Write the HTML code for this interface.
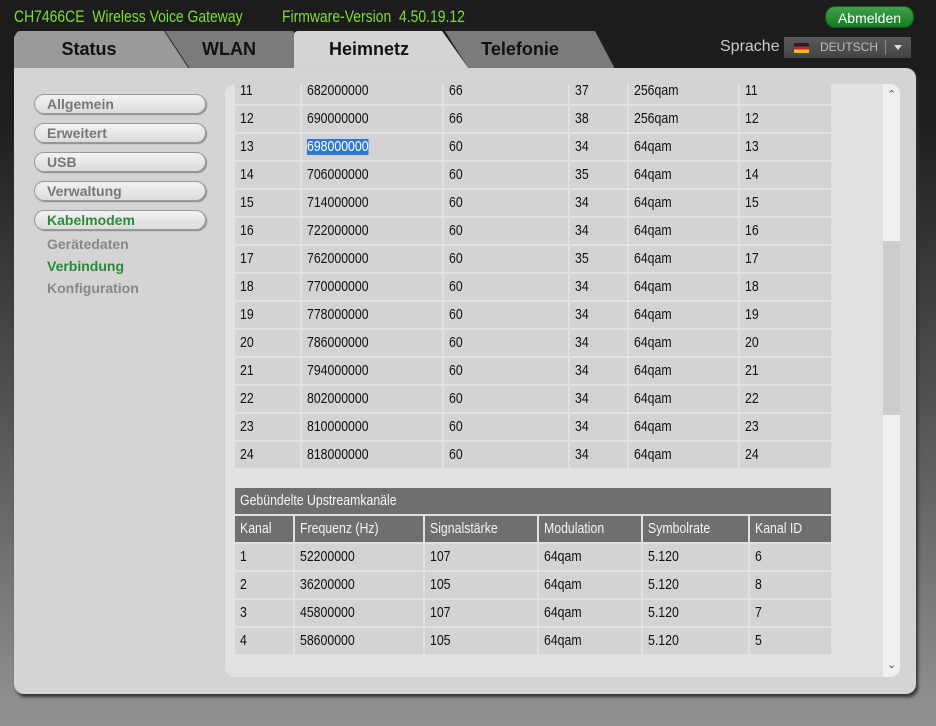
<!DOCTYPE html>
<html><head><meta charset="utf-8"><style>
*{margin:0;padding:0;box-sizing:border-box}
body{width:936px;height:726px;overflow:hidden;font-family:"Liberation Sans",Arial,sans-serif;background:linear-gradient(#1c1c1c 0px,#1e1e1e 120px,#555 420px,#8e8e8e 700px,#909090 726px);position:relative}
.a{position:absolute}
.s{display:inline-block;transform:scaleX(.82);transform-origin:0 50%;white-space:nowrap}
.top{color:#7ddc3c;font-size:17px;top:7px}
.btn{left:825px;top:6px;width:89px;height:22px;border-radius:10px;background:linear-gradient(#3fa14a,#167a26);color:#fff;font-size:14px;text-align:center;line-height:22px;border:1px solid #0d5a18}
.tab{top:31px;height:38px;font-weight:bold;font-size:18px;line-height:36px;text-align:center;color:#111}
.main{left:14px;top:68px;width:902px;height:626px;background:#d4d4d4;border-radius:0 10px 10px 10px;box-shadow:2px 3px 3px #333}
.side{left:34px;width:172px;height:20px;border:1px solid #9a9a9a;border-radius:10px;background:linear-gradient(#f2f2f2,#dcdcdc);font-weight:bold;font-size:14px;color:#777;padding-left:12px;line-height:18px;box-shadow:1px 1px 1px #888}
.sub{left:47px;font-weight:bold;font-size:14px;color:#888}
.inner{left:225px;top:84px;width:675px;height:593px;background:#e1e1e1;border-radius:10px;overflow:hidden}
.c{position:absolute;background:#d3d3d3;font-size:15px;color:#111;padding-left:5px;line-height:26px;height:26px}
.h{background:#6f6f6f;color:#f4f4f4}
</style></head><body>
<div class="a top" style="left:14px"><span class="s">CH7466CE&nbsp; Wireless Voice Gateway</span></div>
<div class="a top" style="left:282px"><span class="s">Firmware-Version&nbsp; 4.50.19.12</span></div>
<div class="a btn">Abmelden</div>
<div class="a tab" style="left:14px;width:175px;background:#9a9a9a;clip-path:polygon(0 6px,4px 0,150px 0,175px 38px,0 38px);text-indent:-25px;border-radius:6px 0 0 0">Status</div>
<div class="a tab" style="left:165px;width:150px;background:#7b7b7b;clip-path:polygon(0 0,128px 0,150px 38px,25px 38px);text-indent:-22px">WLAN</div>
<div class="a tab" style="left:294px;width:175px;background:#d4d4d4;clip-path:polygon(0 38px,0 0,148px 0,175px 38px);text-indent:-25px;border-radius:4px 0 0 0">Heimnetz</div>
<div class="a tab" style="left:445px;width:170px;background:#7b7b7b;clip-path:polygon(0 0,150px 0,170px 38px,24px 38px);text-indent:-20px">Telefonie</div>
<div class="a" style="left:720px;top:38px;color:#ccc;font-size:16px">Sprache</div>
<div class="a" style="left:784px;top:37px;width:127px;height:21px;background:linear-gradient(#5a5a5a,#444);color:#bbb;font-size:12px;line-height:21px">
<div class="a" style="left:10px;top:6px;width:15px;height:10px;background:linear-gradient(#222 33%,#c22 33%,#c22 66%,#e8c020 66%)"></div>
<span class="a" style="left:36px">DEUTSCH</span>
<div class="a" style="left:101px;top:3px;width:1px;height:15px;background:#888"></div>
<div class="a" style="left:110px;top:8px;border-left:4px solid transparent;border-right:4px solid transparent;border-top:5px solid #ddd"></div>
</div>
<div class="a main"></div>
<div class="a side" style="top:94px">Allgemein</div>
<div class="a side" style="top:123px">Erweitert</div>
<div class="a side" style="top:152px">USB</div>
<div class="a side" style="top:181px">Verwaltung</div>
<div class="a side" style="top:210px;color:#2a8a3a">Kabelmodem</div>
<div class="a sub" style="top:236px">Gerätedaten</div>
<div class="a sub" style="top:258px;color:#2a8a3a">Verbindung</div>
<div class="a sub" style="top:280px">Konfiguration</div>
<div class="a inner" id="in"></div>
<div class="a" style="left:883px;top:84px;width:17px;height:593px;background:#f0f0f0;border-radius:0 10px 10px 0"></div>
<div class="a" style="left:883px;top:241px;width:17px;height:174px;background:#cdcdcd"></div>
<div class="a" style="left:887px;top:88px;font-size:11px;color:#555">&#8963;</div>
<div class="a" style="left:887px;top:658px;font-size:11px;color:#555">&#8964;</div>
<script>
var inn=document.getElementById('in');
function cell(x,y,w,t,cls){var d=document.createElement('div');d.className='c'+(cls?' '+cls:'');d.style.left=(x-225)+'px';d.style.top=(y-84)+'px';d.style.width=w+'px';var sp=document.createElement('span');sp.className='s';sp.textContent=t;if(t==='698000000'){sp.style.background='#3077d0';sp.style.color='#fff';sp.style.lineHeight='16px'}d.appendChild(sp);inn.appendChild(d);}
var dc=[[235,65],[302,140],[444,124],[570,57],[629,109],[740,91]];
var rows=[[11,682,66,37,'256qam'],[12,690,66,38,'256qam'],[13,698,60,34,'64qam'],[14,706,60,35,'64qam'],[15,714,60,34,'64qam'],[16,722,60,34,'64qam'],[17,762,60,35,'64qam'],[18,770,60,34,'64qam'],[19,778,60,34,'64qam'],[20,786,60,34,'64qam'],[21,794,60,34,'64qam'],[22,802,60,34,'64qam'],[23,810,60,34,'64qam'],[24,818,60,34,'64qam']];
rows.forEach(function(r,k){var v=[r[0],r[1]+'000000',r[2],r[3],r[4],r[0]];var y=78+28*k;dc.forEach(function(c,i){cell(c[0],y,c[1],String(v[i]))})});
cell(235,488,596,'Gebündelte Upstreamkanäle','h');
var uc=[[235,58],[295,128],[425,112],[539,102],[643,105],[750,81]];
var hd=['Kanal','Frequenz (Hz)','Signalstärke','Modulation','Symbolrate','Kanal ID'];
uc.forEach(function(c,i){cell(c[0],516,c[1],hd[i],'h')});
var ur=[[1,'52200000',107,6],[2,'36200000',105,8],[3,'45800000',107,7],[4,'58600000',105,5]];
ur.forEach(function(r,k){var v=[r[0],r[1],r[2],'64qam','5.120',r[3]];uc.forEach(function(c,i){cell(c[0],544+28*k,c[1],String(v[i]))})});
</script>
</body></html>
